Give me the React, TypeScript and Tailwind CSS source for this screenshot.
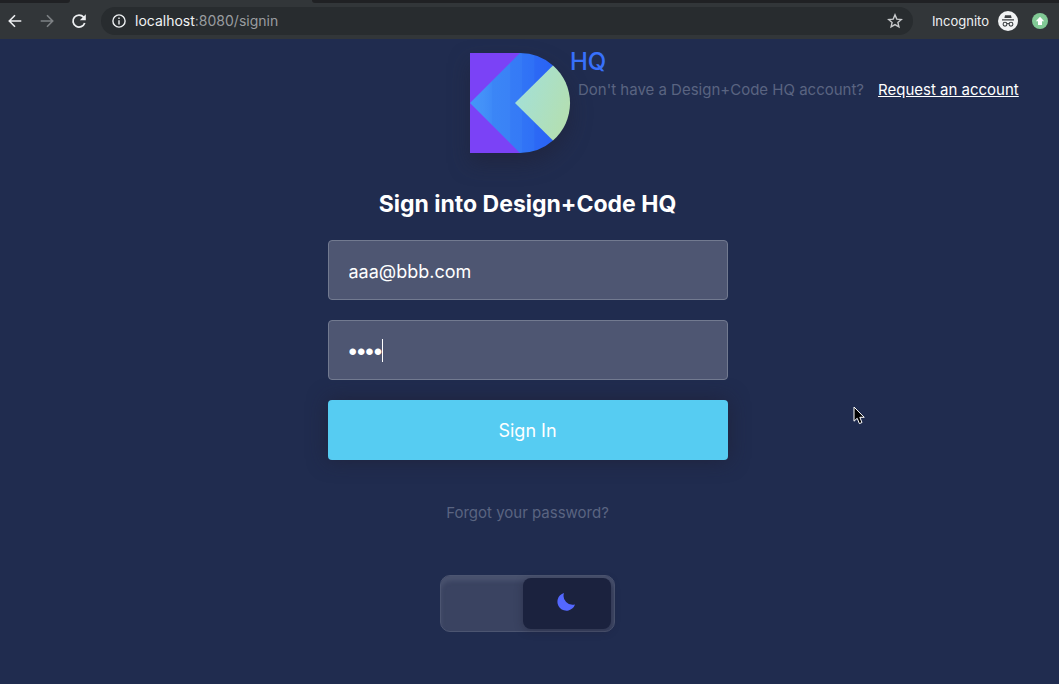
import { useState } from "react";

function BrowserBar() {
  return (
    <header className="bg-[#323639] font-['Inter','Liberation_Sans',sans-serif]">
      <div className="flex h-[3px] bg-[#323639]">
        <div className="w-[70px] rounded-br bg-[#202124]" />
        <div className="w-[242px]" />
        <div className="flex-1 rounded-bl bg-[#202124]" />
      </div>
      <div className="flex h-9 items-center pl-[7px] pr-[11px] text-[#eef0f2]">
        <button aria-label="Back" className="size-4">
          <svg viewBox="0 0 16 16" className="size-4" fill="none" stroke="currentColor" strokeWidth="1.6">
            <path d="M14.3 8H2.5M8 2.3L2.3 8L8 13.7" />
          </svg>
        </button>
        <button aria-label="Forward" className="ml-4 size-4 text-[#7e8285]">
          <svg viewBox="0 0 16 16" className="size-4" fill="none" stroke="currentColor" strokeWidth="1.6">
            <path d="M1.7 8H13.5M8 2.3L13.7 8L8 13.7" />
          </svg>
        </button>
        <button aria-label="Reload" className="ml-4 size-4">
          <svg viewBox="0 0 16 16" className="size-4" fill="none" stroke="currentColor" strokeWidth="1.8">
            <path d="M13.7 10A6 6 0 1 1 12.6 4.2" />
            <path d="M14.8 1.2V7.2H8.8Z" fill="currentColor" stroke="none" />
          </svg>
        </button>
        <div className="ml-[14px] flex h-7 flex-1 items-center rounded-full bg-[#282c2f] pl-[11px] pr-[10px]">
          <svg viewBox="0 0 14 14" className="size-[14px]" fill="none" stroke="currentColor" strokeWidth="1.4">
            <circle cx="7" cy="7" r="6.1" />
            <path d="M7 6.2V10.4M7 3.6V5" />
          </svg>
          <p className="ml-[9px] flex-1 text-sm text-[#9a9da0]">
            <span className="text-[#f1f3f4]">localhost</span>:8080/signin
          </p>
          <button aria-label="Bookmark this page" className="size-4 text-[#c8cacc]">
            <svg viewBox="0 0 16 16" className="size-4" fill="none" stroke="currentColor" strokeWidth="1.4">
              <path d="M8 1.9L9.8 6.1L14.3 6.5L10.9 9.5L11.9 13.9L8 11.6L4.1 13.9L5.1 9.5L1.7 6.5L6.2 6.1Z" />
            </svg>
          </button>
        </div>
        <span className="ml-[19px] pt-px text-[13px]">Incognito</span>
        <svg viewBox="0 0 20 20" className="ml-[9px] size-5">
          <circle cx="10" cy="10" r="10" fill="#f1f3f4" />
          <path d="M7 4.2H13L13.6 7H6.4ZM4 8.2H16V9.5H4Z" fill="#3c4043" />
          <g fill="none" stroke="#3c4043" strokeWidth="1.1">
            <circle cx="7" cy="13.2" r="1.9" />
            <circle cx="13" cy="13.2" r="1.9" />
            <path d="M8.9 12.8Q10 12.2 11.1 12.8" />
          </g>
        </svg>
        <svg viewBox="0 0 16 16" className="ml-[14px] size-4">
          <circle cx="8" cy="8" r="8" fill="#81c995" />
          <path d="M8 3.8L12.2 8.2H10V12H6V8.2H3.8Z" fill="#fff" />
        </svg>
      </div>
    </header>
  );
}

function Logo() {
  return (
    <svg viewBox="0 0 100 100" className="size-[100px] overflow-visible drop-shadow-[0_10px_10px_rgba(31,31,51,0.5)]">
      <defs>
        <linearGradient id="blue" gradientUnits="userSpaceOnUse" x1="0" y1="0" x2="83" y2="0">
          <stop offset="0" stopColor="#4596f8" />
          <stop offset="0.16" stopColor="#4391f8" />
          <stop offset="0.26" stopColor="#3e8af7" />
          <stop offset="0.27" stopColor="#3b86f6" />
          <stop offset="0.48" stopColor="#3a82f6" />
          <stop offset="0.49" stopColor="#367cf6" />
          <stop offset="0.62" stopColor="#357af6" />
          <stop offset="0.63" stopColor="#3174f6" />
          <stop offset="0.77" stopColor="#2f70f6" />
          <stop offset="0.78" stopColor="#2c69f5" />
          <stop offset="1" stopColor="#2962f5" />
        </linearGradient>
        <linearGradient id="green" x1="0" y1="0.3" x2="1" y2="0.8">
          <stop offset="0" stopColor="#a3e0d8" />
          <stop offset="1" stopColor="#b5dfae" />
        </linearGradient>
      </defs>
      <path d="M0 0H50V100H0Z" fill="#7b42f6" />
      <path d="M0 50L50 0A50 50 0 0 1 83 12.4L60 50L83 87.6A50 50 0 0 1 50 100Z" fill="url(#blue)" />
      <path d="M45 50L83 12.4A50 50 0 0 1 83 87.6Z" fill="url(#green)" />
    </svg>
  );
}

const fieldStyle = "block h-[60px] w-full rounded border border-[#727a90] bg-[#4e5672] px-5 text-white outline-none";

export default function App() {
  const [email, setEmail] = useState("aaa@bbb.com");
  const [password, setPassword] = useState("pass");
  const [dark, setDark] = useState(true);

  return (
    <div className="flex min-h-screen flex-col bg-[#202c4f] font-['Inter','Liberation_Sans',sans-serif]">
      <BrowserBar />
      <main className="flex-1 pb-[52px] pt-[14px]">
        <div className="grid grid-cols-[1fr_auto_1fr] pr-[19px]">
          <div className="col-start-2">
            <Logo />
          </div>
          <div className="whitespace-nowrap">
            <p className="-mt-[3px] text-2xl leading-6 font-medium text-[#3871fb]">HQ</p>
            <p className="pl-2 pt-1 text-[15px] leading-6 text-[#5a6481]">
              Don't have a Design+Code HQ account?
              <a href="#request" className="ml-[14px] text-white underline">
                Request an account
              </a>
            </p>
          </div>
        </div>

        <div className="flex flex-col items-center pr-1">
          <h1 className="mt-[37px] text-[23px] leading-7 font-bold text-white">Sign into Design+Code HQ</h1>
          <form className="mt-[22px] flex w-full max-w-[400px] flex-col gap-5" onSubmit={(e) => e.preventDefault()}>
            <input
              type="email"
              aria-label="Email"
              className={fieldStyle + " pt-[2px] text-lg"}
              value={email}
              onChange={(e) => setEmail(e.target.value)}
            />
            <div className="relative">
              <input
                type="password"
                aria-label="Password"
                className={fieldStyle + " font-['Liberation_Sans',sans-serif] pt-1 text-2xl caret-transparent"}
                value={password}
                onChange={(e) => setPassword(e.target.value)}
              />
              <span className="absolute left-[54px] top-[19px] h-[23px] w-px bg-white" />
            </div>
            <button
              type="submit"
              className="h-[60px] rounded bg-[#56ccf2] pt-px text-lg text-white shadow-[0_0_20px_rgba(31,31,51,0.7)]"
            >
              Sign In
            </button>
          </form>
          <a href="#forgot" className="mt-[41px] text-[15px] leading-6 text-[#5a6481]">
            Forgot your password?
          </a>
          <button
            role="switch"
            aria-checked={dark}
            aria-label="Dark mode"
            onClick={() => setDark(!dark)}
            className={
              "mt-[50px] flex h-[57px] w-[175px] rounded-[10px] border border-[#4c5571] bg-[#3a4361] px-[3px] py-[2px] shadow-[inset_0_5px_4px_rgba(78,86,114,0.8)] " +
              (dark ? "justify-end" : "justify-start")
            }
          >
            <span className="flex h-[51px] w-[88px] items-center justify-center rounded-lg bg-[#1b223e] shadow-[0_2px_8px_rgba(31,31,51,0.4)]">
              <svg viewBox="0 0 18 18" className="mb-[3px] mr-[3px] size-[18px]" fill="#5468ff">
                <path d="M7 0A9 9 0 1 0 18 11.4A9 9 0 0 1 7 0Z" />
              </svg>
            </span>
          </button>
        </div>
      </main>
      <svg viewBox="0 0 12 19" className="pointer-events-none absolute left-[853px] top-[406px] h-[19px] w-3">
        <path
          d="M1 1V15.2L4.2 12.3L6.4 17.6L9 16.5L6.8 11.3H11.2Z"
          fill="#000"
          stroke="#fff"
          strokeWidth="1"
        />
      </svg>
    </div>
  );
}
